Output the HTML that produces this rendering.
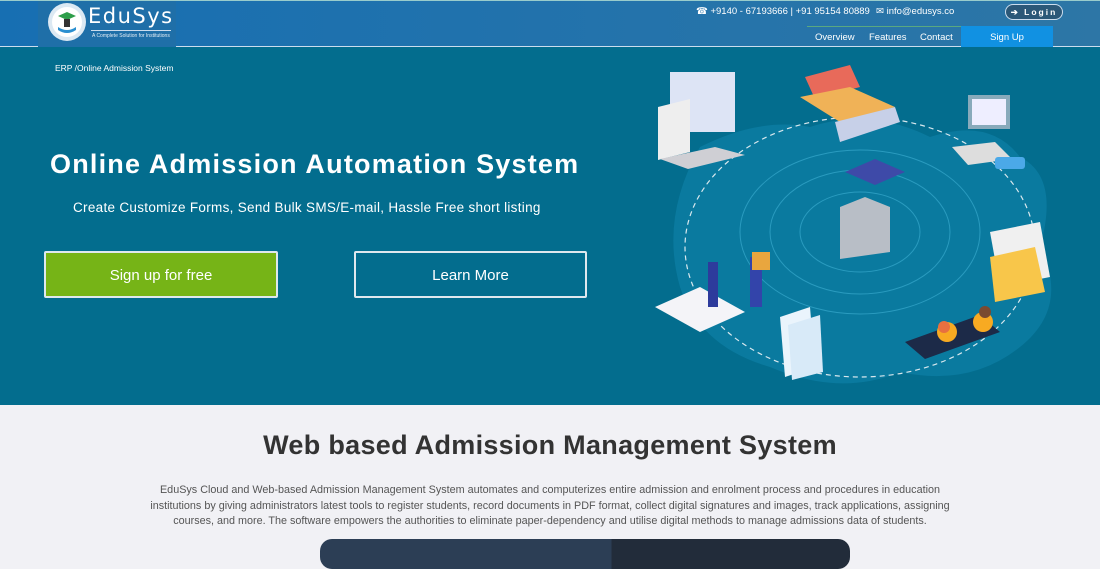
<!DOCTYPE html>
<html><head><meta charset="utf-8"><style>
*{margin:0;padding:0;box-sizing:border-box}
body{width:1100px;height:550px;overflow:hidden;font-family:"Liberation Sans",sans-serif;background:#f1f1f5;position:relative}
.hdr{position:absolute;left:0;top:0;width:1100px;height:47px;background:linear-gradient(90deg,#176fb2,#2d76a6);border-top:1px solid #9cc;border-bottom:1px solid #cde}
.logo{position:absolute;left:38px;top:0;width:138px;height:46px;background:#1f6fa8}
.hero{position:absolute;left:0;top:47px;width:1100px;height:358px;background:#036d8e}
.t{position:absolute;color:#fff;white-space:nowrap}
.btn{position:absolute;border:2px solid #dfe8ee;border-radius:2px;color:#fff;font-size:15px;text-align:center;line-height:45px}
</style></head><body>
<div class="hdr">
 <div class="logo">
  <svg width="138" height="46" style="position:absolute;left:0;top:0">
   <circle cx="29" cy="21" r="19" fill="#dce9f3"/><circle cx="29" cy="21" r="15" fill="#fff"/>
   <path d="M20 26 Q29 32 38 26 L38 29 Q29 35 20 29Z" fill="#2a8fd0"/>
   <path d="M20 15 L29 11 L38 15 L29 19Z" fill="#2e9e4a"/><rect x="26" y="18" width="6" height="8" fill="#333"/>
  </svg>
  <div class="t" style="left:50px;top:3px;font-size:21px;letter-spacing:1.5px;font-family:'DejaVu Sans',sans-serif">EduSys</div>
  <div style="position:absolute;left:53px;top:29px;width:80px;border-top:1px solid #cde"></div>
  <div class="t" style="left:54px;top:32px;font-size:5px;color:#e4eef5">A Complete Solution for Institutions</div>
 </div>
 <div class="t" style="left:696px;top:5px;font-size:9.5px">&#9742; +9140 - 67193666 | +91 95154 80889</div>
 <div class="t" style="left:876px;top:5px;font-size:9.5px">&#9993; info@edusys.co</div>
 <div class="t" style="left:1005px;top:3px;width:58px;height:16px;border:1px solid #cde;border-radius:9px;background:#2b5878;font-size:8.5px;font-weight:bold;letter-spacing:2px;line-height:14px;text-align:center">&#10132; Login</div>
 <div style="position:absolute;left:807px;top:25px;width:154px;height:1px;background:#5aa880"></div>
 <div class="t" style="left:815px;top:31px;font-size:9.5px">Overview</div>
 <div class="t" style="left:869px;top:31px;font-size:9.5px">Features</div>
 <div class="t" style="left:920px;top:31px;font-size:9.5px">Contact</div>
 <div class="t" style="left:961px;top:25px;width:92px;height:22px;background:#1191e2;font-size:9.5px;text-align:center;line-height:24px">Sign Up</div>
</div>
<div class="hero">
 <div class="t" style="left:55px;top:16px;font-size:8.5px">ERP /Online Admission System</div>
 <div class="t" style="left:50px;top:102px;font-size:27px;font-weight:bold;letter-spacing:1.2px">Online Admission Automation System</div>
 <div class="t" style="left:73px;top:153px;font-size:13.5px;letter-spacing:0.3px">Create Customize Forms, Send Bulk SMS/E-mail, Hassle Free short listing</div>
 <div class="btn" style="left:44px;top:204px;width:234px;height:47px;background:#76b417">Sign up for free</div>
 <div class="btn" style="left:354px;top:204px;width:233px;height:47px">Learn More</div>
 <svg width="460" height="358" style="position:absolute;left:640px;top:0">
  <g fill="#0a7a9f">
   <path d="M60 100 Q120 70 170 80 Q230 60 290 90 Q350 70 380 110 Q420 130 400 200 Q430 260 380 300 Q330 340 260 325 Q200 350 130 320 Q60 300 40 240 Q20 170 60 100Z"/>
  </g>
  <g fill="none" stroke="#2a9bbf" stroke-width="1">
   <ellipse cx="220" cy="185" rx="60" ry="40"/><ellipse cx="220" cy="185" rx="90" ry="62"/><ellipse cx="220" cy="185" rx="120" ry="82"/>
  </g>
  <ellipse cx="220" cy="200" rx="175" ry="130" fill="none" stroke="#d8e8ee" stroke-width="1.2" stroke-dasharray="5 4"/>
  <rect x="30" y="25" width="65" height="60" fill="#dde4f5"/><path d="M18 60 L50 52 L50 105 L18 113Z" fill="#eee"/><path d="M20 112 L75 100 L105 108 L48 122Z" fill="#cfcfd4"/>
  <path d="M165 30 L210 18 L220 40 L175 52Z" fill="#e86a5a"/><path d="M160 50 L210 40 L255 60 L200 75Z" fill="#f0b257"/><path d="M195 75 L255 60 L260 75 L200 95Z" fill="#c7d0e8"/>
  <rect x="328" y="48" width="42" height="34" fill="#8ab" /><rect x="332" y="52" width="34" height="26" fill="#eef"/><path d="M312 100 L355 95 L372 112 L328 118Z" fill="#ddd"/><rect x="355" y="110" width="30" height="12" rx="3" fill="#4ba9e8"/>
  <path d="M200 160 L225 150 L250 160 L250 205 L200 212Z" fill="#b8bec6"/><path d="M205 125 L235 112 L265 125 L235 138Z" fill="#3e4aa8"/>
  <path d="M350 185 L400 175 L410 230 L360 240Z" fill="#f0f0f0"/><path d="M350 210 L395 200 L405 245 L355 255Z" fill="#f8c64a"/>
  <path d="M15 260 L60 240 L105 265 L60 285Z" fill="#f4f4f8"/><rect x="68" y="215" width="10" height="45" fill="#2d3b9c"/><rect x="110" y="210" width="12" height="50" fill="#3344aa"/><rect x="112" y="205" width="18" height="18" fill="#e9a63e"/>
  <path d="M140 270 L170 260 L175 320 L145 330Z" fill="#eaf4fc"/><path d="M148 278 L180 268 L183 325 L152 333Z" fill="#d8eaf8"/>
  <path d="M265 295 L340 268 L360 285 L285 312Z" fill="#1c2a48"/><circle cx="307" cy="285" r="10" fill="#f8aa22"/><circle cx="343" cy="275" r="10" fill="#f8aa22"/><circle cx="304" cy="280" r="6" fill="#e77040"/><circle cx="345" cy="265" r="6" fill="#7a4a30"/>
 </svg>
</div>
<div class="t" style="left:0;width:1100px;text-align:center;top:430px;font-size:27px;font-weight:bold;color:#333;letter-spacing:0.3px">Web based Admission Management System</div>
<div style="position:absolute;left:135px;width:830px;top:483px;font-size:10.8px;line-height:15.5px;color:#555;text-align:center">EduSys Cloud and Web-based Admission Management System automates and computerizes entire admission and enrolment process and procedures in education institutions by giving administrators latest tools to register students, record documents in PDF format, collect digital signatures and images, track applications, assigning courses, and more. The software empowers the authorities to eliminate paper-dependency and utilise digital methods to manage admissions data of students.</div>
<div style="position:absolute;left:320px;top:539px;width:530px;height:30px;border-radius:12px;background:linear-gradient(90deg,#2c3e55 55%,#222c3a 55%)"></div>
</body></html>
